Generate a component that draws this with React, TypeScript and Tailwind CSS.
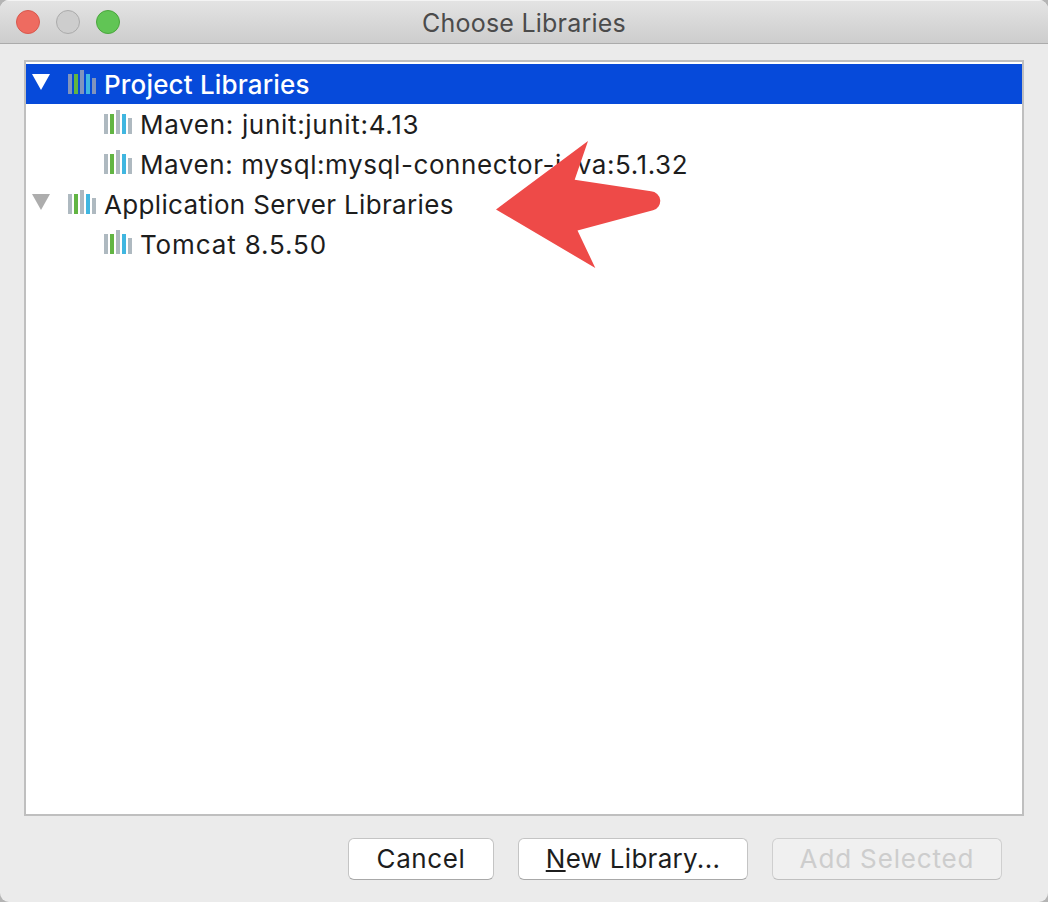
import React from "react";

type Row = {
  label: string;
  child?: boolean;
  selected?: boolean;
  text: string;
};

const rows: Row[] = [
  { label: "Project Libraries", selected: true, text: "tracking-[0.17px] font-medium" },
  { label: "Maven: junit:junit:4.13", child: true, text: "tracking-[0.68px]" },
  { label: "Maven: mysql:mysql-connector-java:5.1.32", child: true, text: "tracking-[0.58px]" },
  { label: "Application Server Libraries", text: "tracking-[0.34px]" },
  { label: "Tomcat 8.5.50", child: true, text: "tracking-[0.87px]" },
];

function LibraryIcon({ selected }: { selected?: boolean }) {
  const gray = selected ? "#8094BD" : "#AEB9C0";
  return (
    <svg width="28" height="24" viewBox="0 0 28 24" className="mt-1.5 shrink-0" shapeRendering="crispEdges">
      <path fill={gray} d="M0 4h4v20H0zM12 0h4v24h-4zM24 8h4v16h-4z" />
      <path fill="#62B543" d="M6 4h4v20H6z" />
      <path fill="#40B6E0" d="M18 4h4v20h-4z" />
    </svg>
  );
}

function TreeRow({ row }: { row: Row }) {
  return (
    <div className={`flex h-10 items-start pl-1.5 ${row.selected ? "bg-[#064ADA] text-white" : "text-[#1d1d1d]"}`}>
      <div className={row.child ? "w-[72px] shrink-0" : "w-9 shrink-0"}>
        {!row.child && (
          <svg width="18" height="16" viewBox="0 0 18 16" className="mt-2.5">
            <path d="M0 0h18L9 16z" fill={row.selected ? "#ffffff" : "#ADADAD"} />
          </svg>
        )}
      </div>
      <LibraryIcon selected={row.selected} />
      <span className={`ml-2 whitespace-nowrap text-[26px] leading-[42px] ${row.text}`}>{row.label}</span>
    </div>
  );
}

export default function App() {
  return (
    <div className="h-[902px] w-[1048px] bg-[#B4B4B4] font-[Inter,sans-serif]">
      <div className="relative flex h-full flex-col overflow-hidden rounded-[9px] bg-[#EBEBEB]">
        <header className="flex h-11 shrink-0 items-center border-b border-[#ABABAB] bg-linear-to-b from-[#E4E4E4] to-[#CDCDCD] pl-4 shadow-[inset_0_1px_0_#f4f4f4]">
          <div className="flex w-[104px] gap-4">
            <span className="size-6 rounded-full border border-[#D9584D] bg-[#EE6B60]" />
            <span className="size-6 rounded-full border border-[#ABABAB] bg-[#CDCDCD]" />
            <span className="size-6 rounded-full border border-[#4AA63D] bg-[#61C555]" />
          </div>
          <h1 className="mr-[120px] mt-1 flex-1 text-center text-[25px] tracking-[0.22px] text-[#4b4b4b]">Choose Libraries</h1>
        </header>

        <main className="mx-6 mt-4 h-[756px] shrink-0 border-2 border-[#BFBFBF] bg-white pt-0.5">
          {rows.map((row) => (
            <TreeRow key={row.label} row={row} />
          ))}
        </main>

        <footer className="mt-[22px] flex justify-end gap-6 pr-[46px] text-[26px] leading-10 text-[#1d1d1d]">
          <button className="h-[42px] w-[146px] rounded-md border border-[#C4C4C4] border-b-[#A8A8A8] bg-white tracking-[0.6px]">Cancel</button>
          <button className="h-[42px] w-[230px] rounded-md border border-[#C4C4C4] border-b-[#A8A8A8] bg-white tracking-[0.3px]">
            <span className="underline decoration-2 underline-offset-2">N</span>ew Library...
          </button>
          <button disabled className="h-[42px] w-[230px] rounded-md border border-[#CFCFCF] border-b-[#C0C0C0] bg-[#F0F0F0] tracking-[0.85px] text-[#CDCDCD]">
            Add Selected
          </button>
        </footer>

        <svg width="168" height="130" viewBox="0 0 168 130" className="absolute left-[495px] top-[140px]">
          <path
            fill="#EE4A48"
            d="M1 69.5L93 1L79.7 39.7L156 51.3A9.6 9.6 0 0 1 158 70.2L82.5 90.5L100.3 128Z"
          />
        </svg>
      </div>
    </div>
  );
}
